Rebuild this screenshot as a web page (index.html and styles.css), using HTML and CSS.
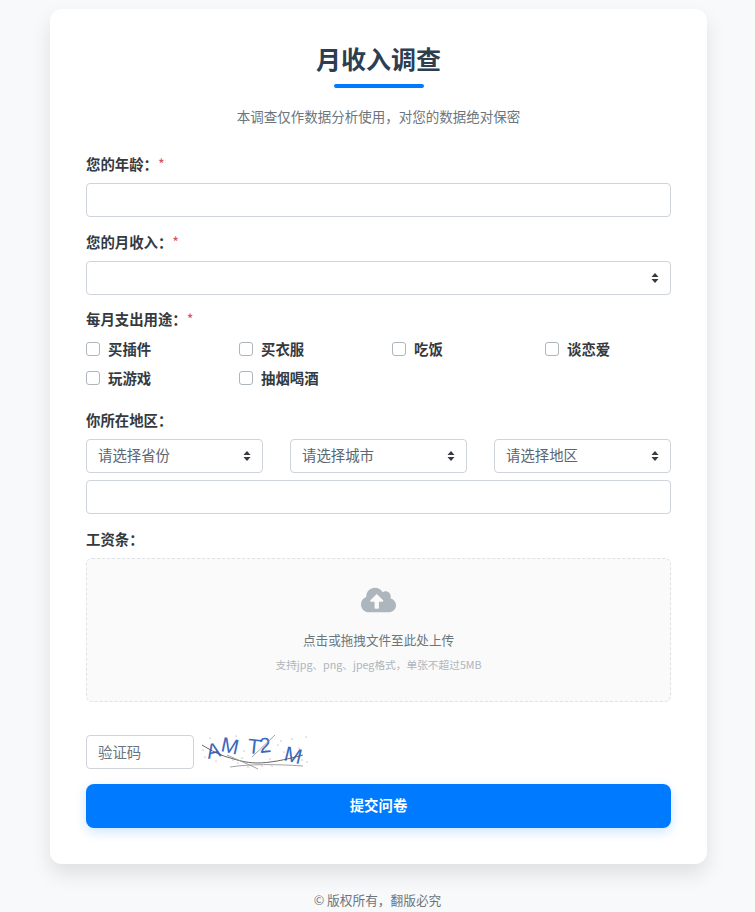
FILE: index.html
```html
<!DOCTYPE html>
<html lang="zh-CN">
<head>
    <meta charset="utf-8">
    <title>月收入调查</title>
    <link rel="stylesheet" href="styles.css">
</head>
<body>
    <div class="card">
        <div class="header">
            <h1>月收入调查</h1>
            <p class="subtitle">本调查仅作数据分析使用，对您的数据绝对保密</p>
        </div>

        <div class="field">
            <label class="field-label">您的年龄：<span class="required">*</span></label>
            <input class="control" type="text">
        </div>

        <div class="field">
            <label class="field-label">您的月收入：<span class="required">*</span></label>
            <select class="control select"><option></option></select>
        </div>

        <div class="field field-check">
            <label class="field-label">每月支出用途：<span class="required">*</span></label>
            <div class="check-grid">
                <label class="check-item"><input type="checkbox">买插件</label>
                <label class="check-item"><input type="checkbox">买衣服</label>
                <label class="check-item"><input type="checkbox">吃饭</label>
                <label class="check-item"><input type="checkbox">谈恋爱</label>
                <label class="check-item"><input type="checkbox">玩游戏</label>
                <label class="check-item"><input type="checkbox">抽烟喝酒</label>
            </div>
        </div>

        <div class="field">
            <label class="field-label">你所在地区：</label>
            <div class="region-row">
                <select class="control select"><option>请选择省份</option></select>
                <select class="control select"><option>请选择城市</option></select>
                <select class="control select"><option>请选择地区</option></select>
            </div>
            <input class="control" type="text">
        </div>

        <div class="field">
            <label class="field-label">工资条：</label>
            <div class="upload">
                <svg class="upload-icon" viewBox="0 0 640 512"><path d="M537.6 226.6c4.1-10.7 6.4-22.4 6.4-34.6 0-53-43-96-96-96-19.7 0-38.1 6-53.3 16.2C367 64.2 315.3 32 256 32c-88.4 0-160 71.6-160 160 0 2.7.1 5.4.2 8.1C40.2 219.8 0 273.2 0 336c0 79.5 64.5 144 144 144h368c70.7 0 128-57.3 128-128 0-61.9-44-113.6-102.4-125.4zM393.4 288H328v112c0 8.8-7.2 16-16 16h-48c-8.8 0-16-7.2-16-16V288h-65.4c-14.3 0-21.4-17.2-11.3-27.3l105.4-105.4c6.2-6.2 16.4-6.2 22.6 0l105.4 105.4c10.1 10.1 2.9 27.3-11.3 27.3z"/></svg>
                <div class="upload-text">点击或拖拽文件至此处上传</div>
                <div class="upload-hint">支持jpg、png、jpeg格式，单张不超过5MB</div>
            </div>
        </div>

        <div class="captcha-row">
            <input class="control captcha-input" type="text" placeholder="验证码">
            <svg class="captcha" viewBox="0 0 110 38">
                <g class="captcha-text">
                    <text transform="translate(8 26) rotate(-12)">A</text>
                    <text transform="translate(20 18) rotate(12)">M</text>
                    <text transform="translate(47 20) rotate(6)">T</text>
                    <text transform="translate(60 20) rotate(-6)">2</text>
                    <text transform="translate(83 27) rotate(14)">M</text>
                </g>
                <path class="captcha-line" d="M2 12 C12 18 20 22 27 24 S45 30 57 30 S85 27 103 22"/>
                <path class="captcha-line light" d="M30 34 C50 31 75 31 103 33"/>
                <path class="captcha-line light" d="M27 22 C38 27 48 31 58 36"/>
                <path class="captcha-line light" d="M52 24 L75 2"/>
                <g class="captcha-dots">
                    <circle cx="3" cy="17" r=".5"/><circle cx="10" cy="5" r=".5"/><circle cx="5" cy="24" r=".5"/>
                    <circle cx="16" cy="28" r=".5"/><circle cx="27" cy="8" r=".5"/><circle cx="36" cy="3" r=".5"/>
                    <circle cx="42" cy="25" r=".5"/><circle cx="44" cy="18" r=".5"/><circle cx="55" cy="8" r=".5"/>
                    <circle cx="62" cy="33" r=".5"/><circle cx="70" cy="26" r=".5"/><circle cx="78" cy="12" r=".5"/>
                    <circle cx="84" cy="19" r=".5"/><circle cx="92" cy="6" r=".5"/><circle cx="99" cy="15" r=".5"/>
                    <circle cx="106" cy="4" r=".5"/><circle cx="107" cy="29" r=".5"/><circle cx="38" cy="30" r=".5"/>
                    <circle cx="66" cy="17" r=".5"/><circle cx="72" cy="33" r=".5"/><circle cx="48" cy="34" r=".5"/>
                    <circle cx="33" cy="27" r=".5"/><circle cx="81" cy="8" r=".5"/><circle cx="102" cy="27" r=".5"/>
                </g>
            </svg>
        </div>

        <button class="submit">提交问卷</button>
    </div>

    <div class="footer">© 版权所有，翻版必究</div>
</body>
</html>
```

FILE: styles.css
```css
html, body {
    margin: 0;
    padding: 0;
    overflow: hidden;
}

body {
    height: 912px;
    background-color: #f8f9fb;
    font-family: "Noto Sans CJK SC", "Noto Sans", sans-serif;
    font-size: 14.4px;
    color: #343a40;
}

.card {
    box-sizing: border-box;
    width: 657px;
    height: 855px;
    margin: 9px 0 0 50px;
    padding: 33px 36px 0;
    background-color: #fff;
    border-radius: 12px;
    box-shadow: 0 10px 20px rgba(0, 0, 0, 0.1);
}

.header {
    text-align: center;
    margin-bottom: 28px;
}

h1 {
    position: relative;
    margin: 0;
    padding-bottom: 14px;
    font-size: 25px;
    line-height: 32px;
    font-weight: 700;
    color: #2c3e50;
}

h1::after {
    content: "";
    position: absolute;
    left: 50%;
    bottom: 0;
    width: 90px;
    height: 4px;
    margin-left: -45px;
    background-color: #007bff;
    border-radius: 2px;
}

.subtitle {
    margin: 18px 0 0;
    font-size: 13.5px;
    line-height: 20px;
    color: #6c757d;
}

.field {
    margin-bottom: 15px;
}

.field-check {
    margin-top: -1px;
    margin-bottom: 18px;
}

.field-label {
    display: block;
    margin-bottom: 10px;
    font-size: 14.4px;
    line-height: 19px;
    font-weight: 700;
    color: #343a40;
}

.required {
    color: #d9534f;
    font-weight: 400;
}

.control {
    display: block;
    box-sizing: border-box;
    width: 100%;
    height: 34px;
    padding: 0 11px;
    font-family: inherit;
    font-size: 14.4px;
    color: #5c6670;
    background-color: #fff;
    border: 1px solid #ced4da;
    border-radius: 4px;
    outline: none;
}

.control::placeholder {
    color: #6c757d;
}

.select {
    appearance: none;
    -webkit-appearance: none;
    padding-right: 28px;
    padding-bottom: 3px;
    background-image: url("data:image/svg+xml,%3Csvg xmlns='http://www.w3.org/2000/svg' width='8' height='10' viewBox='0 0 8 10'%3E%3Cpath fill='%23343a40' d='M4 0L.5 4h7zM4 10L.5 6h7z'/%3E%3C/svg%3E");
    background-repeat: no-repeat;
    background-position: right 11px center;
}

.check-grid {
    display: grid;
    grid-template-columns: repeat(4, 153px);
    grid-auto-rows: 29px;
    margin-top: -4px;
    margin-right: -27px;
}

.check-item {
    display: flex;
    align-items: center;
    font-weight: 700;
    color: #343a40;
}

.check-item input {
    appearance: none;
    -webkit-appearance: none;
    box-sizing: border-box;
    width: 14px;
    height: 14px;
    margin: 0 8px 0 0;
    background-color: #fff;
    border: 1px solid #adb5bd;
    border-radius: 3px;
}

.region-row {
    display: flex;
    gap: 27px;
    margin-bottom: 7px;
}

.upload {
    box-sizing: border-box;
    height: 144px;
    padding-top: 27px;
    text-align: center;
    background-color: #fafafa;
    border: 1px dashed #dee2e6;
    border-radius: 6px;
}

.upload-icon {
    display: block;
    width: 35px;
    height: 28px;
    margin: 0 auto;
    fill: #adb5bd;
}

.upload-text {
    margin-top: 16px;
    font-size: 12.6px;
    line-height: 20px;
    color: #6c757d;
}

.upload-hint {
    margin-top: 7px;
    font-size: 10.7px;
    line-height: 16px;
    color: #adb5bd;
}

.captcha-row {
    display: flex;
    align-items: center;
    gap: 6px;
    margin-top: 31px;
    margin-bottom: 13px;
}

.captcha-input {
    width: 108px;
    flex: none;
    padding-bottom: 2px;
}

.captcha {
    display: block;
    width: 110px;
    height: 38px;
    overflow: visible;
}

.captcha-text {
    font-family: "Liberation Sans", sans-serif;
    font-size: 21px;
    fill: #3a68c0;
}

.captcha-line {
    fill: none;
    stroke: #555;
    stroke-width: 0.9;
}

.captcha-line.light {
    stroke: #999;
}

.captcha-dots {
    fill: #777;
}

.submit {
    display: block;
    width: 100%;
    height: 44px;
    padding: 0 0 3px;
    font-family: inherit;
    font-size: 14.4px;
    font-weight: 700;
    color: #fff;
    background-color: #007bff;
    border: none;
    border-radius: 8px;
    box-shadow: 0 4px 12px rgba(0, 123, 255, 0.2);
}

.footer {
    margin-top: 26px;
    text-align: center;
    font-size: 12.7px;
    line-height: 20px;
    color: #6c757d;
}
```
